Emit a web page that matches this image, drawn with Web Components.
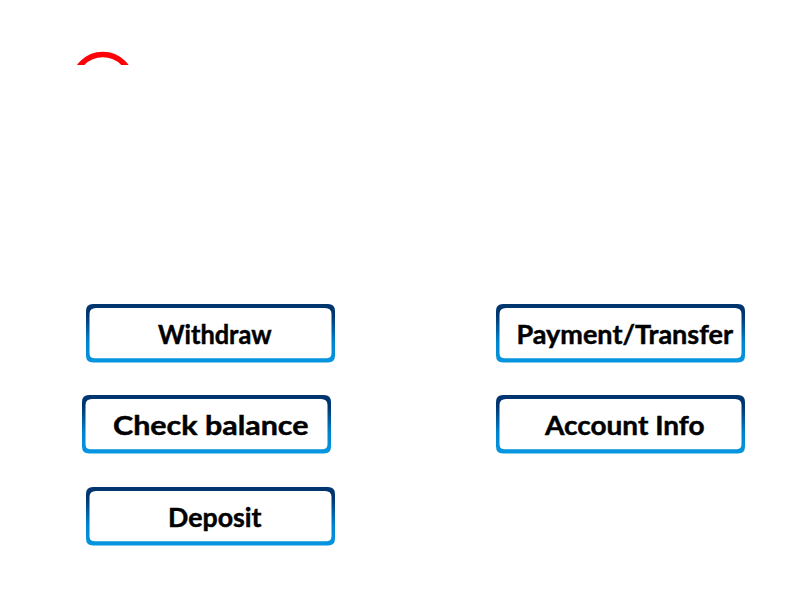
<!DOCTYPE html>
<html lang="en">
<head>
<meta charset="utf-8">
<title>ATM menu</title>
<style>
body { margin: 0; background: #fff; }
</style>
</head>
<body>
<atm-screen>
  <atm-arc slot="header"></atm-arc>
  <atm-button label="Withdraw" start="72" span="113.5"></atm-button>
  <atm-button label="Payment/Transfer" start="20.5" span="216.5"></atm-button>
  <atm-button class="check" label="Check balance" start="31" span="195.5"></atm-button>
  <atm-button label="Account Info" start="49" span="159.5"></atm-button>
  <atm-button label="Deposit" start="82" span="93.5"></atm-button>
</atm-screen>
<script>
class AtmScreen extends HTMLElement {
  constructor() {
    super();
    this.attachShadow({ mode: 'open' }).innerHTML = `
      <style>
        :host { display: flex; flex-direction: column; box-sizing: border-box; width: 800px; height: 600px; overflow: hidden; background: #fff; }
        header { box-sizing: border-box; height: 304px; padding: 50px 0 0 75px; }
        main { display: grid; grid-template-columns: 249px 249px; grid-template-rows: 58.6px 60px 59px; column-gap: 161px; row-gap: 32px; padding-left: 86px; }
        ::slotted(atm-button.check) { margin-left: -4px; }
      </style>
      <header><slot name="header"></slot></header>
      <main><slot></slot></main>`;
  }
}
class AtmArc extends HTMLElement {
  constructor() {
    super();
    this.attachShadow({ mode: 'open' }).innerHTML = `
      <style>:host, svg { display: block; }</style>
      <svg width="56" height="15" viewBox="0 0 56 15"><circle cx="27.8" cy="33.4" r="28.9" fill="none" stroke="#fe0008" stroke-width="5.6"/></svg>`;
  }
}
class AtmButton extends HTMLElement {
  connectedCallback() {
    const root = this.attachShadow({ mode: 'open' });
    root.innerHTML = `
      <style>
        :host { display: block; width: 249px; height: 59px; }
        button { display: block; margin: 0; padding: 0; border: 0; background: none; }
        svg { display: block; }
        text { font: 700 26px Lato, "Open Sans", sans-serif; fill: #000; stroke: #000; stroke-width: .45px; }
      </style>
      <button type="button">
        <svg width="249" height="59" viewBox="0 0 249 59">
          <defs><linearGradient id="edge" x1="0" y1="0" x2="0" y2="1">
            <stop offset="0" stop-color="#013570"/><stop offset=".2" stop-color="#01356f"/>
            <stop offset=".65" stop-color="#0085cf"/><stop offset="1" stop-color="#0796e0"/>
          </linearGradient></defs>
          <path fill="url(#edge)" fill-rule="evenodd" d="M7 0H242Q249 0 249 7V51.500Q249 58.500 242 58.500H7Q0 58.500 0 51.500V7Q0 0 7 0ZM10 3.900Q3.500 3.900 3.500 10V49Q3.500 54.200 8 54.200H241Q245.500 54.200 245.500 49V10Q245.500 3.900 239 3.900Z"/>
          <text y="39.500" lengthAdjust="spacingAndGlyphs"></text>
        </svg>
      </button>`;
    const text = root.querySelector('text');
    text.textContent = this.getAttribute('label');
    text.setAttribute('x', this.getAttribute('start'));
    text.setAttribute('textLength', this.getAttribute('span'));
  }
}
customElements.define('atm-screen', AtmScreen);
customElements.define('atm-arc', AtmArc);
customElements.define('atm-button', AtmButton);
</script>
</body>
</html>
